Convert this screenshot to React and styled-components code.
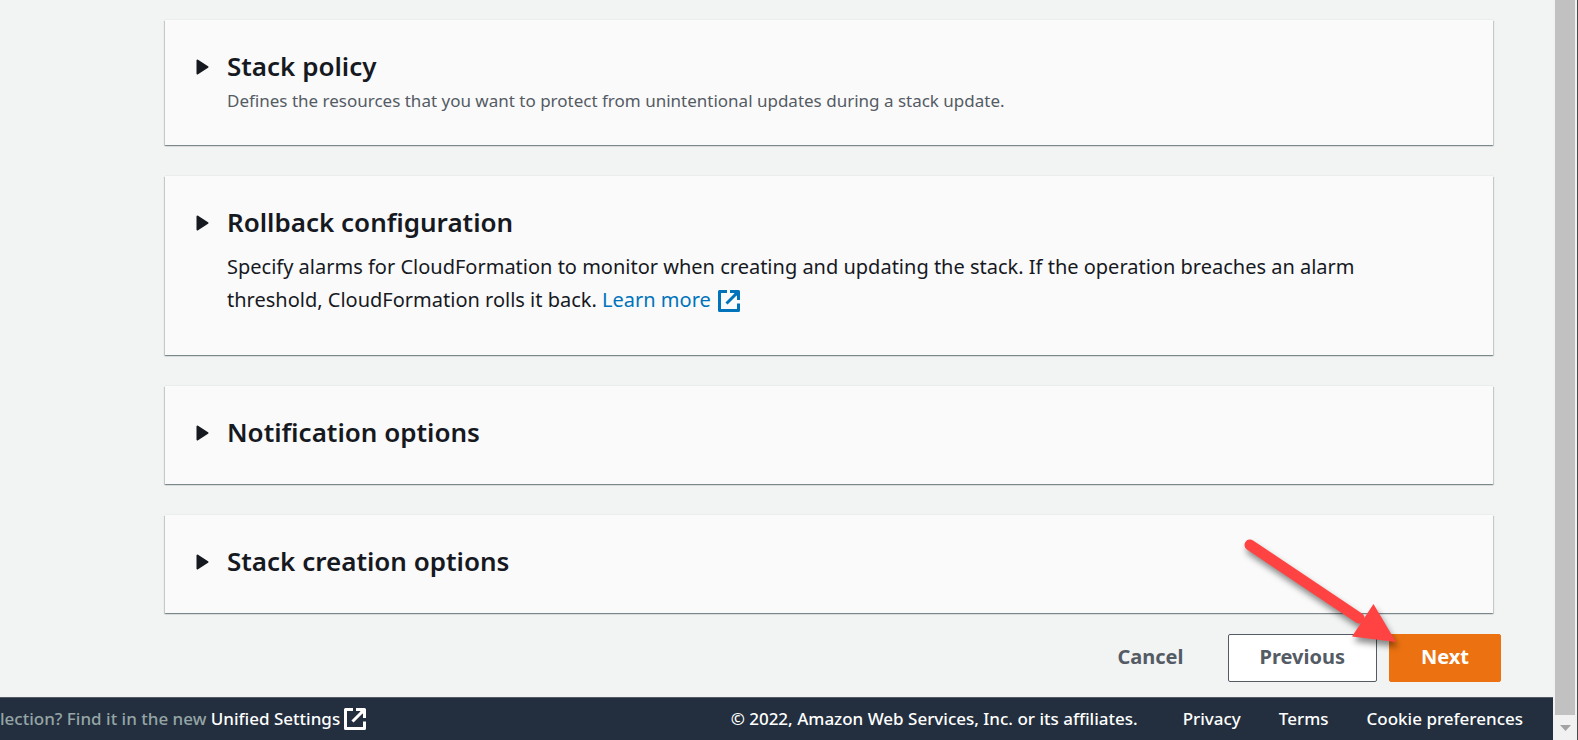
import React, { useState } from "react";
import styled, { createGlobalStyle } from "styled-components";

const GlobalStyle = createGlobalStyle`
  *, *::before, *::after { box-sizing: border-box; }
  body {
    margin: 0;
    background: #f2f3f3;
    color: #16191f;
    font-family: "Noto Sans", "Open Sans", sans-serif;
    font-size: 20px;
    line-height: 33px;
  }
`;

const Page = styled.div`
  display: flex;
  min-height: 100vh;
`;

const Column = styled.div`
  flex: 1;
  min-width: 0;
  display: flex;
  flex-direction: column;
`;

const Main = styled.main`
  flex: 1;
  display: flex;
  flex-direction: column;
  padding: 20px 60px 15px 165px;
`;

const Sections = styled.div`
  display: flex;
  flex-direction: column;
  gap: 31px;
`;

const Card = styled.section`
  display: grid;
  grid-template-columns: 13px 1fr;
  column-gap: 18px;
  padding: 29px 48px 31px 31px;
  background: #fafafa;
  box-shadow:
    0 -1px 0 0 #eaeded,
    0 1px 1px 0 rgba(0, 28, 36, 0.3),
    1px 1px 1px 0 rgba(0, 28, 36, 0.15),
    -1px 1px 1px 0 rgba(0, 28, 36, 0.15);
`;

const Toggle = styled.button`
  display: flex;
  align-items: center;
  height: 36px;
  padding: 0;
  border: 0;
  background: none;
  color: inherit;
  cursor: pointer;
`;

const Heading = styled.h2`
  margin: 0;
  padding-bottom: 4px;
  font-size: 26px;
  font-weight: 600;
  line-height: 34px;
`;

const Description = styled.p`
  margin: 0;
  color: #545b64;
  font-size: 17px;
  line-height: 27px;
`;

const Body = styled.p`
  margin: 7px 0 8px;
`;

const ExternalLink = styled.a`
  color: ${(p) => p.$color};
  font-weight: ${(p) => p.$weight || 400};
  text-decoration: none;
  white-space: nowrap;

  svg {
    margin-left: ${(p) => p.$gap}px;
    vertical-align: -5px;
  }
`;

const Actions = styled.div`
  display: flex;
  justify-content: flex-end;
  gap: 12px;
  margin: 21px -8px 0 0;
`;

const variants = {
  link: "transparent; color: #545b64; border-color: transparent",
  normal: "#ffffff; color: #545b64; border-color: #545b64",
  primary: "#ec7211; color: #ffffff; border-color: #ec7211",
};

const Button = styled.button`
  height: 48px;
  padding: 0 31px 2px;
  border: 1px solid;
  border-radius: 2px;
  background: ${(p) => variants[p.$variant]};
  font-family: inherit;
  font-size: 20px;
  font-weight: 700;
  line-height: 32px;
  cursor: pointer;
`;

const Pointed = styled.div`
  position: relative;
`;

const Arrow = styled.svg`
  position: absolute;
  right: 96px;
  top: -99px;
  overflow: visible;
  pointer-events: none;
  filter: drop-shadow(2px 5px 3px rgba(0, 0, 0, 0.45));
`;

const Footer = styled.footer`
  display: flex;
  align-items: center;
  justify-content: space-between;
  height: 43px;
  padding: 0 30px 2px 0;
  border-top: 1px solid #545b64;
  background: #232f3e;
  color: #ffffff;
  font-size: 17px;
  font-weight: 500;
  line-height: 27px;
  white-space: nowrap;
`;

const Hint = styled.span`
  color: #95a5a6;
`;

const Legal = styled.div`
  display: flex;
  gap: 38px;
`;

const Copyright = styled.span`
  margin-right: 7px;
`;

const FooterLink = styled.a`
  color: inherit;
  text-decoration: none;
`;

const ScrollTrack = styled.div`
  flex: none;
  display: flex;
  flex-direction: column;
  width: 25px;
  padding: 0 2px;
  border-right: 1px solid #4a4a4a;
  background: #f1f1f1;
`;

const ScrollThumb = styled.div`
  flex: 1;
  background: #c1c1c1;
`;

const ScrollDown = styled.div`
  display: flex;
  align-items: center;
  justify-content: center;
  height: 25px;
`;

function ExternalIcon() {
  return (
    <svg width="22" height="22" viewBox="0 0 22 22" fill="none" stroke="currentColor" strokeWidth="3" strokeLinejoin="round" aria-hidden="true">
      <path d="M9 1.5H1.5V20.5H20.5V13.5" />
      <path d="M12 1.5H20.5V10M20 2L8.500 13.500" />
      <path d="M15 2H20V7Z" fill="currentColor" stroke="none" />
    </svg>
  );
}

function Expandable({ title, children }) {
  const [open, setOpen] = useState(false);
  return (
    <Card>
      <Toggle type="button" aria-label={title} aria-expanded={open} onClick={() => setOpen(!open)}>
        <svg width="13" height="16" viewBox="0 0 13 16" fill="currentColor" stroke="currentColor" strokeWidth="2" strokeLinejoin="round" aria-hidden="true">
          <path d="M1.500 1.500L11.500 8L1.500 14.500Z" />
        </svg>
      </Toggle>
      <div>
        <Heading>{title}</Heading>
        {children}
      </div>
    </Card>
  );
}

export default function App() {
  return (
    <>
      <GlobalStyle />
      <Page>
        <Column>
          <Main>
            <Sections>
              <Expandable title="Stack policy">
                <Description>
                  Defines the resources that you want to protect from unintentional updates during a stack update.
                </Description>
              </Expandable>
              <Expandable title="Rollback configuration">
                <Body>
                  Specify alarms for CloudFormation to monitor when creating and updating the stack. If the operation
                  breaches an alarm threshold, CloudFormation rolls it back.{" "}
                  <ExternalLink href="#learn-more" $color="#0073bb" $gap={7}>
                    Learn more
                    <ExternalIcon />
                  </ExternalLink>
                </Body>
              </Expandable>
              <Expandable title="Notification options" />
              <Expandable title="Stack creation options" />
            </Sections>
            <Actions>
              <Button type="button" $variant="link">Cancel</Button>
              <Button type="button" $variant="normal">Previous</Button>
              <Pointed>
                <Button type="button" $variant="primary">Next</Button>
                <Arrow width="170" height="125" viewBox="0 0 170 125" aria-hidden="true">
                  <path d="M15 10L124 83" stroke="#ff4343" strokeWidth="11" strokeLinecap="round" />
                  <path d="M161 107L138.500 69L117 101.500Z" fill="#ff4343" />
                </Arrow>
              </Pointed>
            </Actions>
          </Main>
          <Footer>
            <div>
              <Hint>lection? Find it in the new </Hint>
              <ExternalLink href="#settings" $color="#ffffff" $weight={500} $gap={4}>
                Unified Settings
                <ExternalIcon />
              </ExternalLink>
            </div>
            <Legal>
              <Copyright>© 2022, Amazon Web Services, Inc. or its affiliates.</Copyright>
              <FooterLink href="#privacy">Privacy</FooterLink>
              <FooterLink href="#terms">Terms</FooterLink>
              <FooterLink href="#cookies">Cookie preferences</FooterLink>
            </Legal>
          </Footer>
        </Column>
        <ScrollTrack aria-hidden="true">
          <ScrollThumb />
          <ScrollDown>
            <svg width="11" height="6" viewBox="0 0 11 6" fill="#a3a3a3">
              <path d="M0 0H11L5.500 6Z" />
            </svg>
          </ScrollDown>
        </ScrollTrack>
      </Page>
    </>
  );
}
